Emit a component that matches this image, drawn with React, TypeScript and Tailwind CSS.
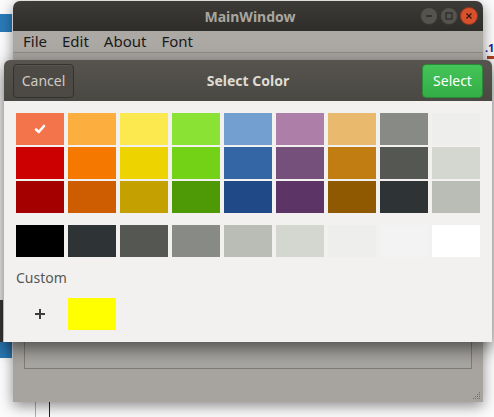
import React from 'react';

const palette: string[][] = [
  ['#f3734a', '#fcaf3e', '#fce94f', '#8ae234', '#729fcf', '#ad7fa8', '#e9b96e', '#888a85', '#eeeeec'],
  ['#cc0000', '#f57900', '#edd400', '#73d216', '#3465a4', '#75507b', '#c17d11', '#555753', '#d3d7cf'],
  ['#a40000', '#ce5c00', '#c4a000', '#4e9a06', '#204a87', '#5c3566', '#8f5902', '#2e3436', '#babdb6'],
];

const grays = ['#000000', '#2e3436', '#555753', '#888a85', '#babdb6', '#d3d7cf', '#eeeeec', '#f3f3f3', '#ffffff'];

const font = { fontFamily: '"Noto Sans", "DejaVu Sans", sans-serif' };

const WinButton: React.FC<{ kind: 'min' | 'max' | 'close' }> = ({ kind }) => (
  <div
    className={`w-[18px] h-[18px] rounded-full flex items-center justify-center ${
      kind === 'close' ? 'bg-[#d9512c]' : 'bg-[#55534e]'
    } shadow-[inset_0_0_0_1px_rgba(0,0,0,0.35)]`}
  >
    <svg width="10" height="10" viewBox="0 0 10 10" fill="none" stroke={kind === 'close' ? '#3a1a10' : '#2d2c29'} strokeWidth="1.3">
      {kind === 'min' && <path d="M2 5h6" />}
      {kind === 'max' && <rect x="2" y="2" width="6" height="6" />}
      {kind === 'close' && <path d="M2.5 2.5l5 5M7.5 2.5l-5 5" />}
    </svg>
  </div>
);

const App: React.FC = () => {
  return (
    <div className="relative w-[494px] h-[417px] bg-[#fbfbfb] overflow-hidden" style={font}>
      {/* desktop bits behind the windows */}
      <div className="absolute left-0 top-[14px] w-[12px] h-[18px] bg-[#2a7ab8]" />
      <div className="absolute left-0 top-[342px] w-[12px] h-[16px] bg-[#2a7ab8]" />
      <div className="absolute left-0 top-[300px] w-[3px] h-[42px] bg-[#3a3a3a]" />
      <div className="absolute left-[35px] top-[400px] w-px h-[17px] bg-[#b0b0b0]" />
      <div className="absolute left-[49px] top-[400px] w-px h-[17px] bg-[#222]" />
      <div className="absolute left-[485px] top-[40px] text-[11px] font-bold text-[#1a1aa8]">.1</div>
      <div className="absolute left-[487px] top-[56px] w-[7px] h-[3px] bg-[#b04020]" />

      {/* main window */}
      <div className="absolute left-[13px] top-[1px] w-[470px] h-[401px] rounded-t-[7px] flex flex-col overflow-hidden shadow-[0_4px_14px_rgba(0,0,0,0.45)]">
        <div className="h-[30px] bg-gradient-to-b from-[#3c3b37] to-[#2e2d2a] flex items-center relative">
          <div className="flex-1 text-center text-[14px] font-bold text-[#aaa69f] pl-[4px]">MainWindow</div>
          <div className="absolute right-[5px] top-[6px] flex gap-[2px]">
            <WinButton kind="min" />
            <WinButton kind="max" />
            <WinButton kind="close" />
          </div>
        </div>
        <div className="h-[22px] bg-[#aca8a4] border-b border-[#8f8b86] flex items-center gap-[15px] px-[10px] text-[15px] text-[#1a1a1a]">
          <span>File</span>
          <span>Edit</span>
          <span>About</span>
          <span>Font</span>
        </div>
        <div className="flex-1 bg-[#a7a4a0] px-[11px] pt-[10px] pb-[33px] relative">
          <div className="h-full border border-[#7f7c78] bg-gradient-to-b from-[#5e5c59] via-[#9a9794] to-[#a8a6a3]" />
          <div className="absolute right-[3px] bottom-[3px] grid grid-cols-4 gap-[1px]">
            {[0, 0, 0, 1, 0, 0, 1, 1, 0, 1, 1, 1, 1, 1, 1, 1].map((v, i) => (
              <div key={i} className={`w-[1px] h-[1px] ${v ? 'bg-[#6e6b67]' : 'bg-transparent'}`} />
            ))}
          </div>
        </div>
      </div>

      {/* color dialog */}
      <div className="absolute left-[4px] top-[60px] w-[488px] h-[282px] rounded-t-[6px] overflow-hidden flex flex-col shadow-[0_6px_18px_rgba(0,0,0,0.55)]">
        <div className="h-[41px] bg-gradient-to-b from-[#575450] to-[#4a4843] flex items-center justify-between px-[9px] relative">
          <button className="w-[61px] h-[34px] rounded-[4px] border border-[#34322e] bg-[#4d4a45] text-[14px] text-[#cfcbc4] shadow-[inset_0_1px_0_rgba(255,255,255,0.06)]">
            Cancel
          </button>
          <div className="absolute inset-x-0 text-center text-[14px] font-bold text-[#dfdbd2] pointer-events-none">Select Color</div>
          <button className="w-[61px] h-[34px] rounded-[4px] border border-[#2a8a38] bg-gradient-to-b from-[#44c458] to-[#33ad45] text-[14px] text-white">
            Select
          </button>
        </div>
        <div className="flex-1 bg-[#f2f1f0] px-[12px] pt-[12px]">
          <div className="flex flex-col gap-[2px]">
            {palette.map((row, r) => (
              <div key={r} className="flex gap-[4px]">
                {row.map((c, i) => (
                  <div key={i} className="w-[48px] h-[32px] flex items-center justify-center" style={{ backgroundColor: c }}>
                    {r === 0 && i === 0 && (
                      <svg width="12" height="10" viewBox="0 0 12 10" fill="none" stroke="#fff" strokeWidth="2.6" strokeLinecap="round" strokeLinejoin="round">
                        <path d="M2 5.5l2.8 2.5L10 2" />
                      </svg>
                    )}
                  </div>
                ))}
              </div>
            ))}
          </div>
          <div className="flex gap-[4px] mt-[12px]">
            {grays.map((c, i) => (
              <div key={i} className="w-[48px] h-[32px]" style={{ backgroundColor: c }} />
            ))}
          </div>
          <div className="mt-[12px] text-[14px] text-[#555753] h-[18px] leading-[18px]">Custom</div>
          <div className="flex gap-[4px] mt-[11px]">
            <div className="w-[48px] h-[32px] flex items-center justify-center">
              <svg width="12" height="12" viewBox="0 0 12 12" stroke="#3d3d3d" strokeWidth="2">
                <path d="M6 1v10M1 6h10" />
              </svg>
            </div>
            <div className="w-[48px] h-[32px] bg-[#ffff00]" />
          </div>
        </div>
      </div>
    </div>
  );
};

export default App;
